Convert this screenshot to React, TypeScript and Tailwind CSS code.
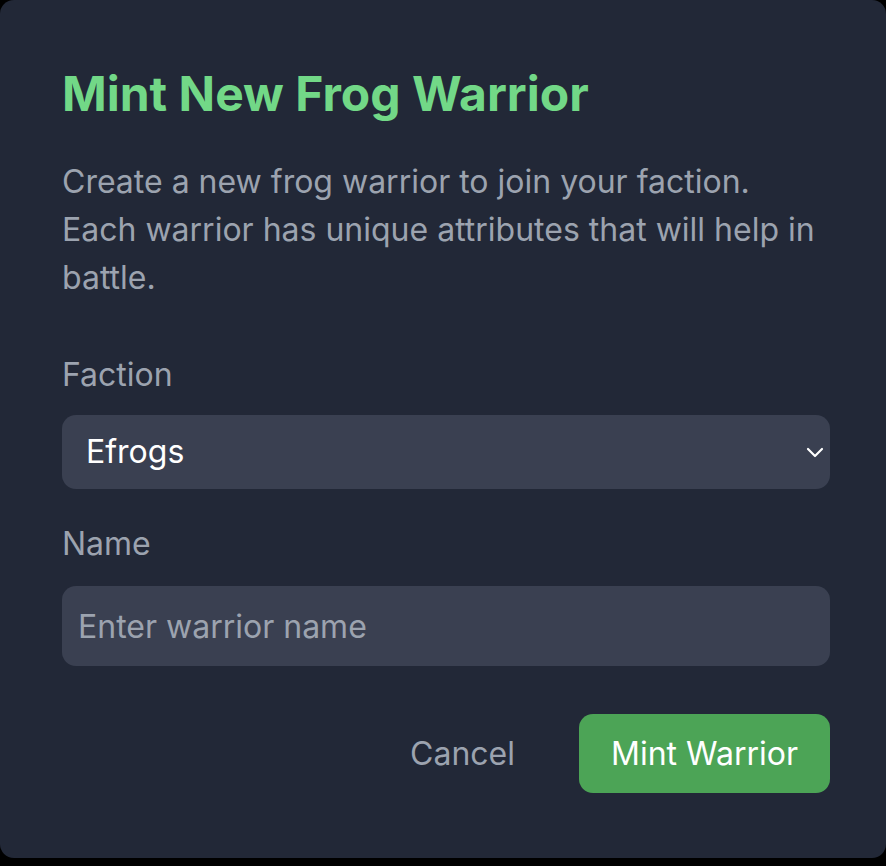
import { useState } from 'react'

const factions = ['Efrogs', 'Bfrogs', 'Dfrogs']

export default function App() {
  const [faction, setFaction] = useState(factions[0])
  const [name, setName] = useState('')

  return (
    <div className="min-h-screen bg-black font-['Inter',sans-serif]">
      <div className="flex h-[858px] w-[886px] flex-col rounded-[14px] bg-[#222837] pl-[62px] pr-[56px] pt-[66px]">
        <h2 className="text-[48px] font-bold leading-[56px] text-[#72d887]">Mint New Frog Warrior</h2>

        <p className="mt-[36px] text-[32px] leading-[48px] text-[#9ca3af]">
          <span className="block">Create a new frog warrior to join your faction.</span>
          <span className="block">Each warrior has unique attributes that will help in battle.</span>
        </p>

        <label className="mt-[51px] block text-[32px] leading-[44px] text-[#9ca3af]">Faction</label>
        <div className="relative mt-[18px]">
          <select
            value={faction}
            onChange={(e) => setFaction(e.target.value)}
            className="h-[74px] w-full appearance-none rounded-[14px] bg-[#3a4051] pl-[24px] text-[32px] text-white outline-none"
          >
            {factions.map((f) => (
              <option key={f}>{f}</option>
            ))}
          </select>
          <svg
            className="pointer-events-none absolute right-[6px] top-[32px] h-[11px] w-[18px]"
            viewBox="0 0 18 11"
            fill="none"
            stroke="white"
            strokeWidth="2.2"
            strokeLinecap="round"
            strokeLinejoin="round"
          >
            <path d="M2 2 L9 9 L16 2" />
          </svg>
        </div>

        <label className="mt-[33px] block text-[32px] leading-[44px] text-[#9ca3af]">Name</label>
        <input
          value={name}
          onChange={(e) => setName(e.target.value)}
          placeholder="Enter warrior name"
          className="mt-[20px] h-[80px] w-full rounded-[14px] bg-[#3a4051] px-[16px] text-[32px] text-white outline-none placeholder:text-[#9ca3af]"
        />

        <div className="mt-[48px] flex items-center justify-end gap-[32px]">
          <button className="px-[32px] text-[32px] text-[#9ca3af]">Cancel</button>
          <button className="h-[79px] rounded-[14px] bg-[#4ca456] px-[32px] text-[32px] text-white">
            Mint Warrior
          </button>
        </div>
      </div>
    </div>
  )
}
